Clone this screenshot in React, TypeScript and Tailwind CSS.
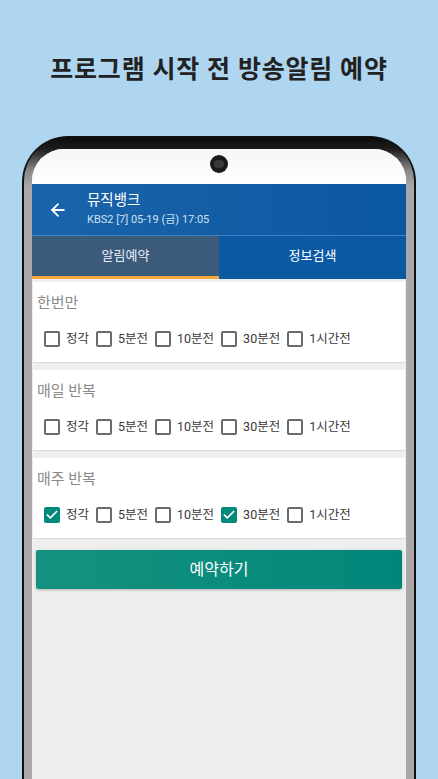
import { ArrowLeft, Check } from "lucide-react";

const options = ["정각", "5분전", "10분전", "30분전", "1시간전"];

const groups = [
  { title: "한번만", checked: [] as number[] },
  { title: "매일 반복", checked: [] as number[] },
  { title: "매주 반복", checked: [0, 3] },
];

function Box({ on }: { on: boolean }) {
  if (on) {
    return (
      <span className="flex h-[16px] w-[16px] items-center justify-center rounded-[2px] bg-[#00897b]">
        <Check size={14} strokeWidth={3} className="text-white" />
      </span>
    );
  }
  return <span className="h-[16px] w-[16px] rounded-[2px] border-2 border-[#6b6b6b]" />;
}

function AlarmGroup({ title, checked }: { title: string; checked: number[] }) {
  return (
    <div className="mx-[1px] bg-white pb-[13px] pl-[4px] pt-[11px] shadow-[0_1px_1px_rgba(0,0,0,0.08)]">
      <div className="h-[20px] text-[15px] leading-[20px] text-[#8a8a8a]">{title}</div>
      <div className="mt-[16px] flex h-[20px] items-center pl-[7px]">
        {options.map((o, i) => (
          <div key={o} className="mr-[7px] flex items-center gap-[6px]">
            <Box on={checked.includes(i)} />
            <span className="text-[12.5px] leading-[20px] text-[#3a3a3a]">{o}</span>
          </div>
        ))}
      </div>
    </div>
  );
}

export default function App() {
  return (
    <div
      className="flex h-[779px] w-[438px] flex-col items-center overflow-hidden bg-[#aed6f1]"
      style={{ fontFamily: 'Roboto, "Noto Sans CJK KR", sans-serif' }}
    >
      <h1 className="mt-[54px] h-[32px] text-[25px] font-bold leading-[32px] tracking-[0.8px] text-[#222]">
        프로그램 시작 전 방송알림 예약
      </h1>

      {/* phone body */}
      <div className="mt-[50px] w-[394px] flex-1 rounded-t-[46px] bg-[#111] px-[2px] pt-[1px]">
        <div className="h-full rounded-t-[44px] bg-[linear-gradient(to_bottom,#0c0c0c_0px,#1c1c1c_12px,#8a8a8a_34px,#a9a9a9_50px)] px-[8px] pt-[12px]">
          <div className="flex h-full flex-col overflow-hidden rounded-t-[32px] bg-[#eeeeee]">
            {/* status area with camera */}
            <div className="flex h-[35px] shrink-0 justify-center bg-[linear-gradient(to_bottom,#f6f6f6,#ffffff)] pt-[6px]">
              <div className="flex h-[18px] w-[18px] items-center justify-center rounded-full bg-[#1a1a1a]">
                <div className="h-[8px] w-[10px] rounded-full bg-[#3a3a3a]" />
              </div>
            </div>

            {/* app bar */}
            <div className="flex h-[52px] shrink-0 items-center border-b border-[#3f82c4] bg-[linear-gradient(to_right,#1a64aa,#0b57a0)]">
              <ArrowLeft size={20} strokeWidth={2.2} className="ml-[16px] text-white" />
              <div className="ml-[19px] flex flex-col">
                <span className="text-[14.5px] leading-[20px] text-white">뮤직뱅크</span>
                <span className="text-[11px] leading-[18px] text-[#cfe0f2]">KBS2 [7] 05-19 (금) 17:05</span>
              </div>
            </div>

            {/* tabs */}
            <div className="grid h-[43px] shrink-0 grid-cols-2">
              <div className="flex items-center justify-center border-b-[3px] border-[#f4a93a] bg-[#3c5a7a] text-[13px] text-[#e8eef5]">
                알림예약
              </div>
              <div className="flex items-center justify-center bg-[#0b59a3] pb-[3px] text-[13px] text-white">
                정보검색
              </div>
            </div>

            <div className="flex flex-col gap-[8px] pt-[3px]">
              {groups.map((g) => (
                <AlarmGroup key={g.title} title={g.title} checked={g.checked} />
              ))}
            </div>

            <button className="mx-[4px] mt-[12px] h-[39px] shrink-0 rounded-[2px] bg-[linear-gradient(to_right,#16917f,#00877a)] text-[16px] text-white shadow-[0_1px_3px_rgba(0,0,0,0.25)]">
              예약하기
            </button>
          </div>
        </div>
      </div>
    </div>
  );
}
